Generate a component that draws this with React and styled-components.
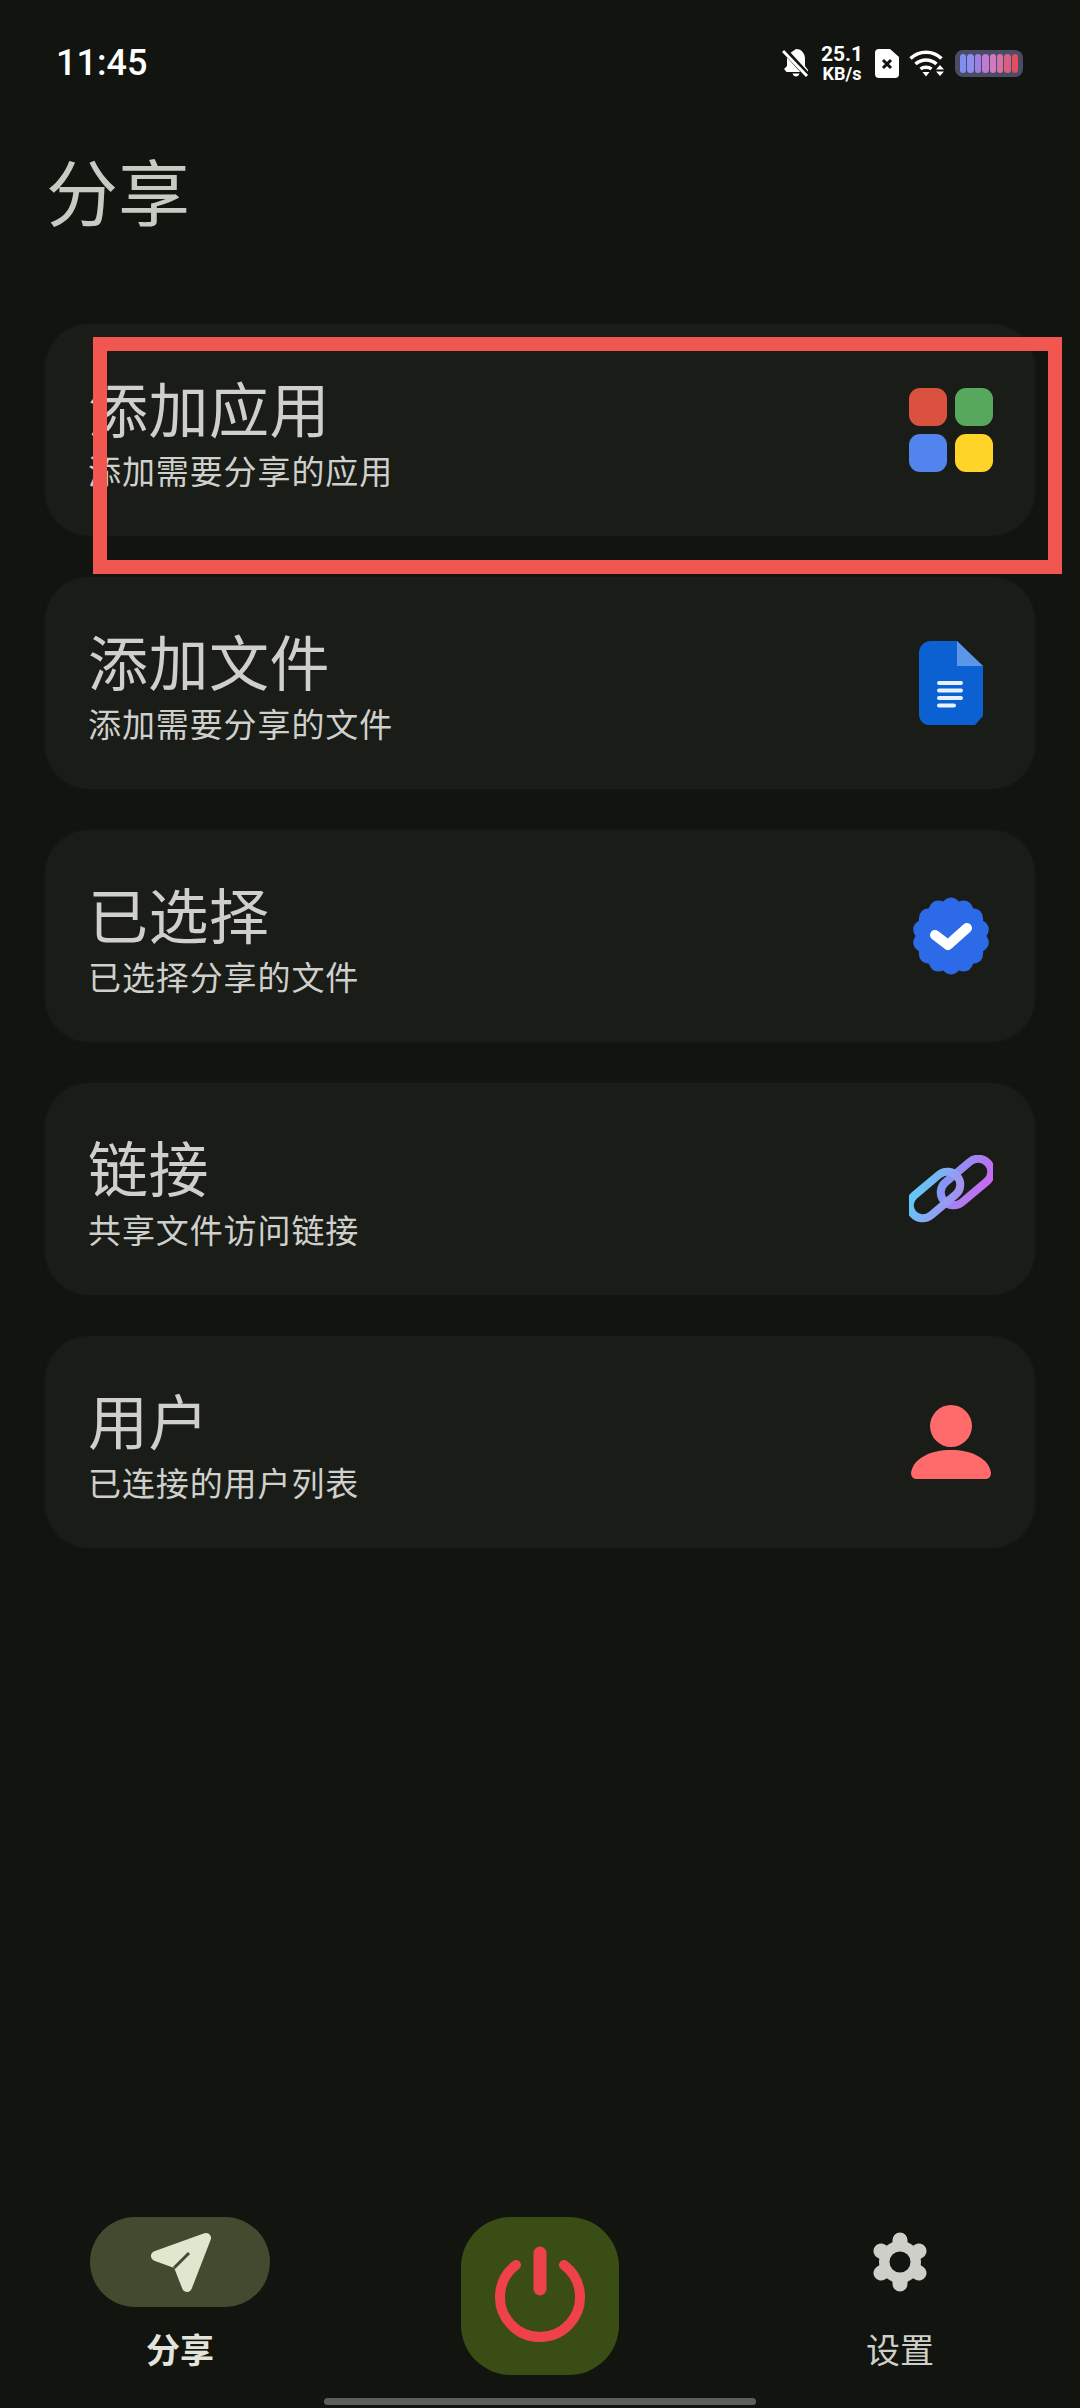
import React from 'react';
import styled, { createGlobalStyle } from 'styled-components';

const GlobalStyle = createGlobalStyle`
  html, body {
    margin: 0;
    padding: 0;
    background: #12140f;
  }
  * { box-sizing: border-box; }
`;

const cjk = `"Noto Sans CJK SC", "Noto Sans", sans-serif`;

const Page = styled.div`
  width: 1080px;
  height: 2408px;
  position: relative;
  display: flex;
  flex-direction: column;
  overflow: hidden;
  background: #12140f;
  font-family: ${cjk};
`;

const StatusBar = styled.div`
  height: 62px;
  margin-top: 32px;
  padding: 0 57px 0 56px;
  display: flex;
  align-items: center;
  justify-content: space-between;
`;

const Clock = styled.div`
  font-family: Roboto, sans-serif;
  font-weight: 500;
  font-size: 36px;
  color: #fff;
`;

const StatusIcons = styled.div`
  display: flex;
  align-items: center;
`;

const Speed = styled.div`
  margin: 0 13px 0 12px;
  width: 40px;
  display: flex;
  flex-direction: column;
  align-items: center;
  font-family: Roboto, sans-serif;
  font-weight: 700;
  color: #fff;
  span {
    font-size: 21px;
    line-height: 21px;
  }
  small {
    font-size: 18px;
    line-height: 18px;
    white-space: nowrap;
  }
`;

const WifiWrap = styled.div`
  margin-left: 10px;
  display: flex;
`;

const Battery = styled.div`
  margin-left: 10px;
  width: 68px;
  height: 27px;
  padding: 4px 5px;
  display: flex;
  gap: 1px;
  border-radius: 8px;
  background: #4a4c66;
`;

const BatteryCell = styled.i`
  flex: 1;
  border-radius: 4px;
  background: ${(p) => p.$color};
`;

const PageTitle = styled.h1`
  margin: 45px 0 0 46px;
  font-size: 72px;
  line-height: 100px;
  font-weight: 400;
  color: #c8cac4;
`;

const CardList = styled.div`
  margin-top: 85px;
  padding: 0 45px;
  display: flex;
  flex-direction: column;
  gap: 41px;
`;

const Card = styled.div`
  height: 212px;
  padding: 0 42px 0 43px;
  display: flex;
  align-items: center;
  justify-content: space-between;
  border-radius: 44px;
  background: #1a1c17;
  box-shadow: 0 0 4px #171914;
`;

const CardText = styled.div`
  padding-top: 7px;
  display: flex;
  flex-direction: column;
`;

const CardTitle = styled.div`
  font-size: 60px;
  line-height: 70px;
  letter-spacing: 0.5px;
  color: #cfd0cc;
`;

const CardSub = styled.div`
  margin-top: 3px;
  font-size: 33px;
  line-height: 50px;
  letter-spacing: 0.9px;
  color: #cfd0cc;
`;

const IconSlot = styled.div`
  width: 84px;
  height: 84px;
  display: flex;
  align-items: center;
  justify-content: center;
`;

const AppGrid = styled.div`
  display: grid;
  grid-template-columns: 38px 38px;
  grid-auto-rows: 38px;
  gap: 8px;
`;

const AppTile = styled.i`
  border-radius: 11px;
  background: ${(p) => p.$color};
`;

const Highlight = styled.div`
  position: absolute;
  left: 93px;
  top: 337px;
  width: 969px;
  height: 237px;
  border: 14px solid #f25650;
  pointer-events: none;
`;

const Nav = styled.div`
  margin-top: auto;
  padding: 0 0 33px;
  display: grid;
  grid-template-columns: 360px 360px 360px;
  align-items: start;
`;

const NavItem = styled.div`
  display: flex;
  flex-direction: column;
  align-items: center;
`;

const NavPill = styled.div`
  width: 180px;
  height: 90px;
  display: flex;
  align-items: center;
  justify-content: center;
  border-radius: 45px;
  background: ${(p) => (p.$active ? '#434a30' : 'transparent')};
`;

const NavLabel = styled.div`
  margin-top: 20px;
  font-size: 34px;
  line-height: 44px;
  font-weight: ${(p) => (p.$active ? 700 : 400)};
  color: ${(p) => (p.$active ? '#e2e4dc' : '#cdcfc8')};
`;

const PowerButton = styled.div`
  width: 158px;
  height: 158px;
  margin: 0 auto;
  display: flex;
  align-items: center;
  justify-content: center;
  border-radius: 50px;
  background: #394d14;
`;

const HomeBar = styled.div`
  position: absolute;
  left: 324px;
  bottom: 3px;
  width: 432px;
  height: 7px;
  border-radius: 4px;
  background: #5d605a;
`;

const BellOff = () => (
  <svg width="28" height="30" viewBox="0 0 28 30">
    <path
      fill="#fff"
      d="M14 1c6 0 9 5 9 10v7l3 4v2H4.500L2 21l3-3v-7c0-1.500.3-3 1-4.500zM10.500 25.500h7c-.5 2-2 3-3.500 3s-3-1-3.500-3z"
    />
    <path d="M3 3l23 25" stroke="#12140f" strokeWidth="6" />
    <path d="M1 3l24 25" stroke="#fff" strokeWidth="3" />
  </svg>
);

const SimOff = () => (
  <svg width="24" height="29" viewBox="0 0 24 29">
    <path fill="#fff" d="M4 0h11l9 8v17a4 4 0 0 1-4 4H4a4 4 0 0 1-4-4V4a4 4 0 0 1 4-4z" />
    <path d="M8 11l8 8M16 11l-8 8" stroke="#12140f" strokeWidth="3" />
  </svg>
);

const Wifi = () => (
  <svg width="36" height="28" viewBox="0 0 36 28" fill="none" stroke="#fff" strokeWidth="3.500">
    <path d="M1.500 9.500C10 1 24 1 32.500 9.500" />
    <path d="M6.500 15c6-5.500 15-5.500 21 0" />
    <path d="M11.500 20c3-2.500 8-2.500 11 0" />
    <path d="M13.500 23h7l-3.500 4.500z" fill="#fff" stroke="none" />
    <path d="M27 20.500h8l-4-4.500zM27 22.500h8l-4 4.500z" fill="#fff" stroke="none" />
  </svg>
);

const DocIcon = () => (
  <svg width="64" height="84" viewBox="0 0 64 84">
    <path fill="#0b60d2" d="M12 0h26l26 25v50l-8 9H10C4 84 0 79 0 73V12C0 5 5 0 12 0z" />
    <path fill="#5b97e6" d="M38 0l26 25H38z" />
    <g stroke="#e8f2ff" strokeWidth="4" strokeLinecap="round">
      <path d="M20 42h22M20 49.500h22M20 57h22M20 64.500h15" />
    </g>
  </svg>
);

// scalloped edge, one bump per step round the circle
const badgePath = () => {
  const steps = 14;
  const step = (Math.PI * 2) / steps;
  const at = (r, a) => `${40 + r * Math.cos(a)} ${40 + r * Math.sin(a)}`;
  let d = `M${at(35.5, -Math.PI / 2 - step / 2)}`;
  for (let i = 0; i < steps; i++) {
    const a = i * step - Math.PI / 2;
    d += `Q${at(42.5, a)} ${at(35.5, a + step / 2)}`;
  }
  return d + 'Z';
};

const BadgeIcon = () => (
  <svg width="80" height="80" viewBox="0 0 80 80">
    <path fill="#2d6ae8" d={badgePath()} />
    <path
      d="M24 39l13 10 19-17"
      fill="none"
      stroke="#fff"
      strokeWidth="10"
      strokeLinecap="round"
      strokeLinejoin="round"
    />
  </svg>
);

const LinkIcon = () => (
  <svg width="84" height="68" viewBox="0 0 84 68" fill="none">
    <defs>
      <linearGradient id="linkA" x1="0" y1="0" x2="1" y2="1">
        <stop offset="0" stopColor="#5ccdf8" />
        <stop offset="1" stopColor="#a98cf0" />
      </linearGradient>
      <linearGradient id="linkB" x1="0" y1="0" x2="1" y2="1">
        <stop offset="0" stopColor="#7d9cf5" />
        <stop offset="1" stopColor="#cd66f0" />
      </linearGradient>
    </defs>
    <rect
      x="28"
      y="14"
      width="58"
      height="26"
      rx="13"
      stroke="url(#linkB)"
      strokeWidth="8"
      transform="rotate(-40 57 27)"
    />
    <rect
      x="-3"
      y="27"
      width="58"
      height="26"
      rx="13"
      stroke="url(#linkA)"
      strokeWidth="8"
      transform="rotate(-40 26 40)"
    />
  </svg>
);

const PersonIcon = () => (
  <svg width="80" height="74" viewBox="0 0 80 74">
    <circle cx="40" cy="21" r="21" fill="#ff6b6b" />
    <path fill="#ff6b6b" d="M0 68C2 53 20 45 40 45s38 8 40 23c0 3-2 6-5 6H5c-3 0-5-3-5-6z" />
  </svg>
);

const SendIcon = () => (
  <svg width="67" height="65" viewBox="0 0 67 65">
    <path
      fill="#dfe8cf"
      stroke="#dfe8cf"
      strokeWidth="10"
      strokeLinejoin="round"
      d="M59 8L9 26l22 8 9 23z"
    />
    <path d="M27 38l15-15" stroke="#434a30" strokeWidth="3" />
  </svg>
);

const PowerIcon = () => (
  <svg width="92" height="100" viewBox="0 0 92 100" fill="none" stroke="#ee4149" strokeLinecap="round">
    <path strokeWidth="10" d="M22 19a40 40 0 1 0 48 0" />
    <path strokeWidth="13" d="M46 7v36" />
  </svg>
);

const GearIcon = () => (
  <svg width="58" height="60" viewBox="0 0 58 60">
    <g stroke="#cdcfc8" strokeWidth="15" strokeLinecap="round">
      <path d="M29 8v44M10 19l38 22M10 41l38-22" />
    </g>
    <circle cx="29" cy="30" r="21" fill="#cdcfc8" />
    <circle cx="29" cy="30" r="10.500" fill="#12140f" />
  </svg>
);

const cards = [
  { title: '添加应用', sub: '添加需要分享的应用', icon: 'apps' },
  { title: '添加文件', sub: '添加需要分享的文件', icon: <DocIcon /> },
  { title: '已选择', sub: '已选择分享的文件', icon: <BadgeIcon /> },
  { title: '链接', sub: '共享文件访问链接', icon: <LinkIcon /> },
  { title: '用户', sub: '已连接的用户列表', icon: <PersonIcon /> },
];

const tiles = ['#db5140', '#57a85d', '#5383ec', '#ffd428'];
const cells = ['#7f8ef0', '#8f8cf5', '#a27ee0', '#c07ad0', '#d27ac0', '#d870a8', '#d8607f', '#e04e60'];

export default function App() {
  return (
    <Page>
      <GlobalStyle />
      <StatusBar>
        <Clock>11:45</Clock>
        <StatusIcons>
          <BellOff />
          <Speed>
            <span>25.1</span>
            <small>KB/s</small>
          </Speed>
          <SimOff />
          <WifiWrap>
            <Wifi />
          </WifiWrap>
          <Battery>
            {cells.map((c) => (
              <BatteryCell key={c} $color={c} />
            ))}
          </Battery>
        </StatusIcons>
      </StatusBar>

      <PageTitle>分享</PageTitle>

      <CardList>
        {cards.map((card) => (
          <Card key={card.title}>
            <CardText>
              <CardTitle>{card.title}</CardTitle>
              <CardSub>{card.sub}</CardSub>
            </CardText>
            <IconSlot>
              {card.icon === 'apps' ? (
                <AppGrid>
                  {tiles.map((c) => (
                    <AppTile key={c} $color={c} />
                  ))}
                </AppGrid>
              ) : (
                card.icon
              )}
            </IconSlot>
          </Card>
        ))}
      </CardList>

      <Nav>
        <NavItem>
          <NavPill $active>
            <SendIcon />
          </NavPill>
          <NavLabel $active>分享</NavLabel>
        </NavItem>
        <PowerButton>
          <PowerIcon />
        </PowerButton>
        <NavItem>
          <NavPill>
            <GearIcon />
          </NavPill>
          <NavLabel>设置</NavLabel>
        </NavItem>
      </Nav>

      <Highlight />
      <HomeBar />
    </Page>
  );
}
